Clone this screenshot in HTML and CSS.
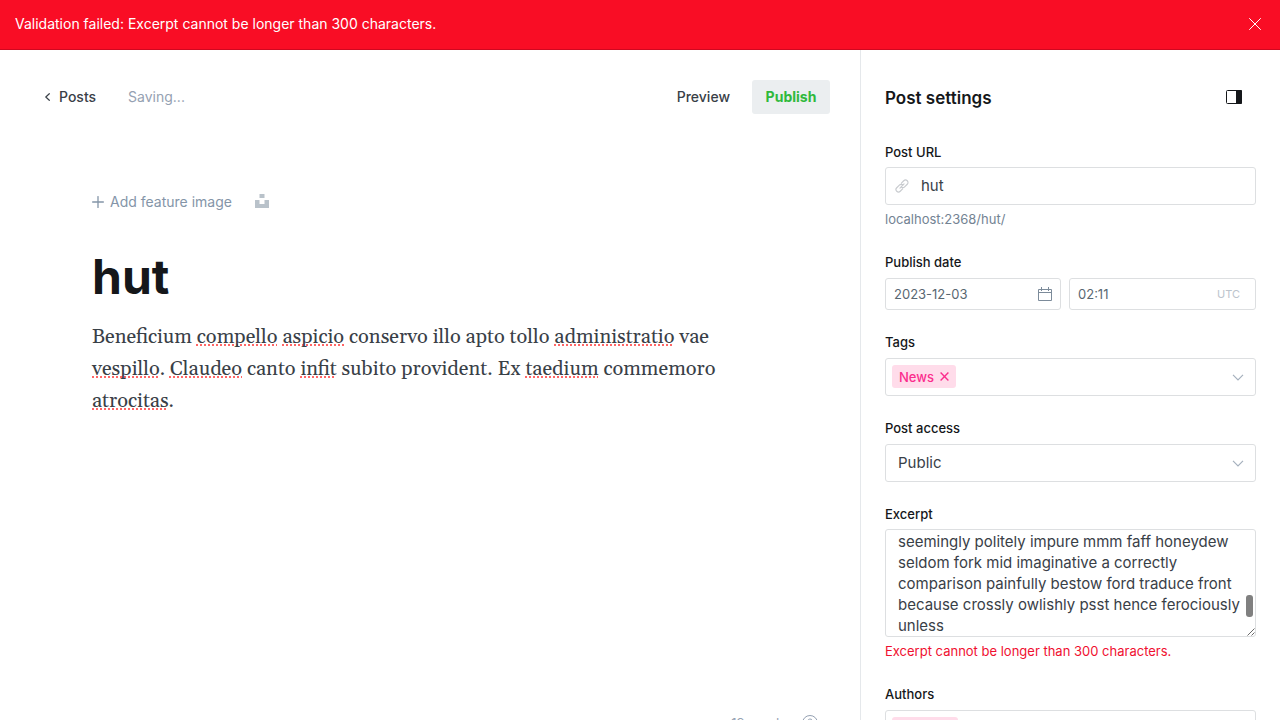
FILE: index.html
```html
<!DOCTYPE html>
<html lang="en">
<head>
<meta charset="utf-8">
<meta name="viewport" content="width=device-width, initial-scale=1">
<title>Post editor</title>
<link rel="stylesheet" href="styles.css">
</head>
<body>
<div class="alert" role="alert">
  <span>Validation failed: Excerpt cannot be longer than 300 characters.</span>
  <button class="icon-button alert-close" type="button" aria-label="Close">
    <svg width="12" height="12" viewBox="0 0 12 12" fill="none" stroke="currentColor" stroke-linecap="round"><path d="M.5.5l11 11M11.500.5l-11 11"/></svg>
  </button>
</div>
<div class="app">
  <main class="editor">
    <header class="editor-header">
      <div class="header-group">
        <a class="back-link" href="#"><svg width="5" height="8" viewBox="0 0 5 8" fill="none" stroke="currentColor" stroke-width="1.200" stroke-linecap="round" stroke-linejoin="round"><path d="M4.300.7L.8 4l3.500 3.300"/></svg>Posts</a>
        <span class="status">Saving...</span>
      </div>
      <div class="header-group header-actions">
        <button class="preview" type="button">Preview</button>
        <button class="publish" type="button">Publish</button>
      </div>
    </header>
    <article class="canvas">
      <div class="feature">
        <button class="feature-add" type="button"><svg width="12" height="12" viewBox="0 0 12 12" fill="none" stroke="currentColor" stroke-width="1.300" stroke-linecap="round"><path d="M6 .6v10.800M.6 6h10.800"/></svg>Add feature image</button>
        <button class="icon-button unsplash" type="button" aria-label="Unsplash"><svg width="14" height="14" viewBox="0 0 14 14" fill="currentColor"><path d="M4.500 0h5v4h-5zM0 6h4.500v4h5V6H14v8H0z"/></svg></button>
      </div>
      <input class="title" type="text" value="hut" aria-label="Post title" spellcheck="false">
      <div class="content" role="textbox" aria-label="Post content" aria-multiline="true">
        <p>Beneficium <u>compello</u> <u>aspicio</u> conservo illo apto tollo <u>administratio</u> vae <u>vespillo</u>. <u>Claudeo</u> canto <u>infit</u> subito provident. Ex <u>taedium</u> commemoro <u>atrocitas</u>.</p>
      </div>
    </article>
    <footer class="editor-footer">
      <span>19 words</span>
      <svg width="16" height="16" viewBox="0 0 16 16" fill="none" stroke="currentColor"><circle cx="8" cy="8" r="7.500"/><path d="M5.900 6.200a2.200 2.200 0 1 1 3.100 2c-.7.3-1 .7-1 1.500"/><circle cx="8" cy="11.800" r=".4"/></svg>
    </footer>
  </main>
  <aside class="settings">
    <header class="settings-header">
      <h2>Post settings</h2>
      <button class="icon-button" type="button" aria-label="Toggle settings"><svg width="16" height="14" viewBox="0 0 16 14"><rect x=".5" y=".5" width="15" height="13" rx="1" fill="none" stroke="currentColor"/><path d="M10 0h5a1 1 0 0 1 1 1v12a1 1 0 0 1-1 1h-5z" fill="currentColor"/></svg></button>
    </header>
    <form class="fields">
      <div class="field tight">
        <label for="url">Post URL</label>
        <div class="box">
          <svg class="link-icon" width="14" height="14" viewBox="0 0 24 24" fill="none" stroke="currentColor" stroke-width="2" stroke-linecap="round"><path d="M8.500 15.500l7-7M11 7l4-4a4.200 4.200 0 0 1 6 6l-4.500 4.500a4.200 4.200 0 0 1-6 0M13 17l-4 4a4.200 4.200 0 0 1-6-6l4.500-4.500a4.200 4.200 0 0 1 6 0"/></svg>
          <input id="url" type="text" value="hut">
        </div>
        <p class="hint">localhost:2368/hut/</p>
      </div>
      <div class="field">
        <label for="date">Publish date</label>
        <div class="row">
          <div class="box small date">
            <input id="date" type="text" value="2023-12-03">
            <svg width="14" height="14" viewBox="0 0 14 14" fill="none" stroke="currentColor"><path d="M.5 2.500h13v11H.5zM.5 5.500h13M3.500 0v4M10.500 0v4"/></svg>
          </div>
          <div class="box small time">
            <input type="text" value="02:11" aria-label="Publish time">
            <span class="zone">UTC</span>
          </div>
        </div>
      </div>
      <div class="field">
        <label for="tags">Tags</label>
        <div class="box tags">
          <button class="tag" type="button">News<svg width="9" height="9" viewBox="0 0 9 9" fill="none" stroke="currentColor" stroke-width="1.400"><path d="M.6.6l7.800 7.800M8.400.6L.6 8.400"/></svg></button>
          <input id="tags" type="text">
          <svg class="chevron" width="12" height="7" viewBox="0 0 12 7" fill="none" stroke="currentColor" stroke-width="1.200"><path d="M1 .8l5 5 5-5"/></svg>
        </div>
      </div>
      <div class="field">
        <label for="access">Post access</label>
        <div class="box select">
          <select id="access"><option>Public</option></select>
          <svg class="chevron" width="12" height="7" viewBox="0 0 12 7" fill="none" stroke="currentColor" stroke-width="1.200"><path d="M1 .8l5 5 5-5"/></svg>
        </div>
      </div>
      <div class="field tight">
        <label for="excerpt">Excerpt</label>
        <div class="excerpt">
          <textarea id="excerpt" spellcheck="false">seemingly politely impure mmm faff honeydew
seldom fork mid imaginative a correctly
comparison painfully bestow ford traduce front
because crossly owlishly psst hence ferociously
unless</textarea>
          <span class="thumb"></span>
          <svg class="grip" width="8" height="8" viewBox="0 0 8 8" stroke="#444" stroke-width=".8"><path d="M.5 7.500l7-7M4.500 7.500l3-3"/></svg>
        </div>
        <p class="error">Excerpt cannot be longer than 300 characters.</p>
      </div>
      <div class="field">
        <label for="authors">Authors</label>
        <div class="box tags">
          <button class="tag" type="button">Ghost<svg width="9" height="9" viewBox="0 0 9 9" fill="none" stroke="currentColor" stroke-width="1.400"><path d="M.6.6l7.800 7.800M8.400.6L.6 8.400"/></svg></button>
          <input id="authors" type="text">
        </div>
      </div>
    </form>
  </aside>
</div>
</body>
</html>
```

FILE: styles.css
```css
* { box-sizing: border-box; }
body {
  margin: 0;
  height: 100vh;
  overflow: hidden;
  background: #fff;
  color: #15171a;
  font: 14px/20px Inter, "Liberation Sans", sans-serif;
}
button, input, select, textarea {
  margin: 0;
  padding: 0;
  border: 0;
  outline: 0;
  background: none;
  color: inherit;
  font: inherit;
}
button { cursor: pointer; }
svg { display: block; flex: none; }
p, h2 { margin: 0; }

.icon-button { display: flex; align-items: center; }

.alert {
  display: flex;
  align-items: center;
  justify-content: space-between;
  padding: 14px 19px 15px 15px;
  border-bottom: 1px solid #cf0820;
  background: #f90d25;
  color: #fff;
}

.app { display: flex; height: 100vh; }

.editor {
  flex: 1;
  min-width: 0;
  display: flex;
  flex-direction: column;
}
.editor-header {
  display: flex;
  justify-content: space-between;
  padding: 30px 30px 0 45px;
  color: #394047;
}
.header-group { display: flex; align-items: center; gap: 32px; }
.header-actions { gap: 22px; }
.back-link {
  display: flex;
  align-items: center;
  gap: 9px;
  color: inherit;
  font-weight: 500;
  text-decoration: none;
}
.status { color: #95a1b2; }
.preview { font-weight: 500; }
.publish {
  min-width: 78px;
  height: 34px;
  padding: 0 13px;
  border-radius: 3px;
  background: #ebeef0;
  color: #30b93c;
  font-weight: 700;
}

.canvas { flex: 1; padding: 78px 92px 0; }
.feature { display: flex; align-items: center; gap: 23px; }
.feature-add { display: flex; align-items: center; gap: 6px; color: #8495a8; }
.unsplash { padding-bottom: 2px; color: #b9c2ca; }
.title {
  display: block;
  width: 100%;
  height: 60px;
  margin-top: 35px;
  font-size: 48px;
  line-height: 60px;
  font-weight: 700;
}
.content {
  max-width: 740px;
  margin-top: 14px;
  color: #394047;
  font: 20px/32px Georgia, Gelasio, "Liberation Serif", serif;
}
.content u {
  text-decoration: underline dotted #f66 2px;
  text-decoration-skip-ink: none;
  text-underline-offset: 1px;
}
.editor-footer {
  display: flex;
  align-items: center;
  justify-content: flex-end;
  gap: 16px;
  padding: 0 42px 37px;
  color: #95a1b2;
  font-size: 13px;
}

.settings {
  width: 420px;
  flex: none;
  padding: 35px 24px 0;
  border-left: 1px solid #e5e8eb;
}
.settings-header {
  display: flex;
  align-items: center;
  justify-content: space-between;
  padding-right: 14px;
}
.settings-header .icon-button { padding-bottom: 2px; }
h2 { font-size: 17px; line-height: 26px; font-weight: 600; }
.fields { display: flex; flex-direction: column; gap: 22px; margin-top: 31px; }
.field { display: flex; flex-direction: column; gap: 6px; }
.field.tight { gap: 5px; }
label { font-size: 13px; line-height: 20px; font-weight: 500; }
.box {
  display: flex;
  align-items: center;
  height: 38px;
  border: 1px solid #dddfe1;
  border-radius: 3px;
  color: #394047;
  font-size: 15px;
}
.box input { flex: 1; min-width: 0; width: 100%; }
.link-icon { margin: 0 12px 0 9px; color: #c8cbcf; }
.hint, .error { margin-bottom: 2px; font-size: 13px; line-height: 18px; }
.hint { color: #738393; }
.error { color: #f01030; }
.row { display: flex; gap: 8px; }
.box.small { height: 32px; padding: 0 8px; color: #596772; font-size: 13px; }
.box.date { width: 176px; }
.date svg { color: #7c8b9a; }
.box.time { flex: 1; }
.zone { padding-right: 7px; color: #bcc4cd; font-size: 11px; }
.tags { align-items: flex-start; padding: 6px 11px 0 6px; }
.tags .chevron { margin-top: 9px; }
.tag {
  display: flex;
  align-items: center;
  gap: 6px;
  height: 23px;
  padding: 0 7px;
  border-radius: 3px;
  background: #ffdcea;
  color: #fb2d8d;
  font-size: 13px;
  font-weight: 500;
}
.select { padding: 0 11px 0 12px; }
.select select { flex: 1; appearance: none; }
.chevron { color: #a5b0bd; }
.excerpt { position: relative; height: 108px; }
.excerpt textarea {
  display: block;
  width: 100%;
  height: 100%;
  padding: 1px 12px 0;
  overflow: hidden;
  resize: none;
  border: 1px solid #dddfe1;
  border-radius: 3px;
  color: #394047;
  font-size: 15px;
  line-height: 21px;
  white-space: pre;
}
.thumb {
  position: absolute;
  right: 3px;
  bottom: 20px;
  width: 7px;
  height: 22px;
  border-radius: 3px;
  background: #808080;
}
.grip { position: absolute; right: 1px; bottom: 1px; }
```
